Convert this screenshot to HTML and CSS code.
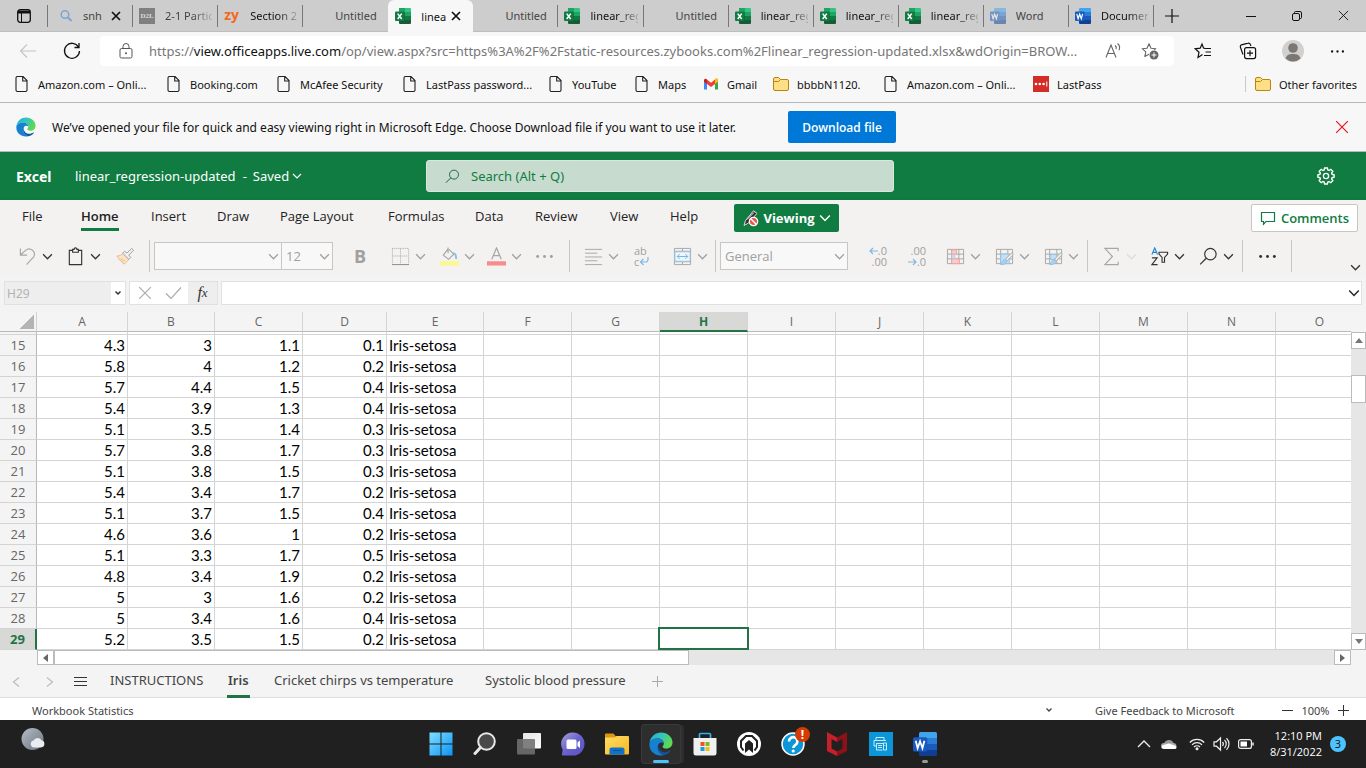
FILE: index.html
```
<!DOCTYPE html>
<html lang="en">
<head>
<meta charset="utf-8">
<title>linear_regression-updated.xlsx</title>
<link rel="stylesheet" href="styles.css">
</head>
<body>
<svg class="sprite" aria-hidden="true">
  <defs>
    <linearGradient id="gWin" x1="0" y1="0" x2="1" y2="1"><stop offset="0" stop-color="#7fe0ff"/><stop offset="1" stop-color="#0a94f5"/></linearGradient>
    <linearGradient id="gChat" x1="0" y1="0" x2="1" y2="1"><stop offset="0" stop-color="#a8a0d8"/><stop offset=".5" stop-color="#6a63cf"/><stop offset="1" stop-color="#5a4fc4"/></linearGradient>
    <linearGradient id="gMoon" x1="0" y1="0" x2="1" y2="1"><stop offset="0" stop-color="#b4bcc6"/><stop offset="1" stop-color="#6d7681"/></linearGradient>
    <linearGradient id="gFold" x1="0" y1="0" x2="1" y2="1"><stop offset="0" stop-color="#ffdc6b"/><stop offset="1" stop-color="#fbb91b"/></linearGradient>
    <linearGradient id="gEdge" x1="0" y1="0" x2="1" y2=".5"><stop offset="0" stop-color="#1fa9e4"/><stop offset=".5" stop-color="#33c6b8"/><stop offset="1" stop-color="#5fd94f"/></linearGradient>
    <linearGradient id="gView" x1="0" y1="0" x2="1" y2="1"><stop offset="0" stop-color="#e6e6e6"/><stop offset="1" stop-color="#fdfdfd"/></linearGradient>
  </defs>
  <symbol id="chev" viewBox="0 0 10 10"><path d="M1 3l4 4 4-4" fill="none" stroke="currentColor" stroke-width="1.2"/></symbol>
  <symbol id="cross" viewBox="0 0 12 12"><path d="M1 1l10 10M11 1L1 11" fill="none" stroke="currentColor" stroke-width="1"/></symbol>
  <symbol id="tabx" viewBox="0 0 10 10"><path d="M1 1l8 8M9 1L1 9" fill="none" stroke="currentColor" stroke-width="1.7"/></symbol>
  <symbol id="dots" viewBox="0 0 18 18"><g fill="currentColor"><circle cx="2.500" cy="9" r="1.400"/><circle cx="9" cy="9" r="1.400"/><circle cx="15.500" cy="9" r="1.400"/></g></symbol>
  <symbol id="xl" viewBox="0 0 16 16"><path d="M4 0h6v8H4z" fill="#21a366"/><path d="M10 0h5a1 1 0 0 1 1 1v3h-6z" fill="#33c481"/><path d="M10 4h6v4h-6z" fill="#21a366"/><path d="M4 4h6v4H4z" fill="#107c41"/><path d="M4 8h6v8H5a1 1 0 0 1-1-1z" fill="#185c37"/><path d="M10 8h6v4h-6z" fill="#107c41"/><path d="M10 12h6v3a1 1 0 0 1-1 1h-5z" fill="#185c37"/><rect y="3.500" width="9.500" height="9.500" rx="1" fill="#107c41"/><path d="M2.700 5.600l4 5.400M6.700 5.600l-4 5.400" stroke="#fff" stroke-width="1.500"/></symbol>
  <symbol id="wd" viewBox="0 0 16 16"><path d="M4 1a1 1 0 0 1 1-1h10a1 1 0 0 1 1 1v3H4z" fill="#41a5ee"/><path d="M4 4h12v4H4z" fill="#2b7cd3"/><path d="M4 8h12v4H4z" fill="#185abd"/><path d="M4 12h12v3a1 1 0 0 1-1 1H5a1 1 0 0 1-1-1z" fill="#103f91"/><rect y="3.500" width="9.500" height="9.500" rx="1" fill="#185abd"/><path d="M1.800 5.800l1.300 5 1.600-4.600 1.600 4.600 1.300-5" fill="none" stroke="#fff" stroke-width="1.200"/></symbol>
  <symbol id="page" viewBox="0 0 16 16"><path d="M3.500.5h5.500l4 4v9.500a1.500 1.500 0 0 1-1.500 1.500h-8a1.500 1.500 0 0 1-1.500-1.500v-12a1.500 1.500 0 0 1 1.500-1.500zM8.700.8v4.200h4.200" fill="none" stroke="#222" stroke-width="1.100"/></symbol>
  <symbol id="folder" viewBox="0 0 16 16"><path d="M.5 3a1.500 1.500 0 0 1 1.500-1.500h3.500L7.500 3.500H14A1.500 1.500 0 0 1 15.500 5v8a1.500 1.500 0 0 1-1.500 1.500H2A1.500 1.500 0 0 1 .5 13z" fill="#ffdf85" stroke="#b8860b"/><path d="M.8 5.500H5.500l2-2" fill="none" stroke="#b8860b"/></symbol>
  <symbol id="edge" viewBox="0 0 24 24"><path d="M.6 10.500C1.500 4.500 6.500.5 12 .5c6.500 0 11.500 4.500 11.500 10 0 3.700-2.700 6-6 6-2.400 0-3.900-.9-3.900-1.800 0-.8 1.200-1.200 1.200-3.200 0-3-2.800-5-6.300-5C5 6.500 2 8 .6 10.500z" fill="url(#gEdge)"/><path d="M.6 10.500C2 8 5 6.500 8.500 6.500c3.500 0 6.300 2 6.300 5-1-1.500-4-1.600-5.300.7-1.800 3.300-.5 8.800 5 11C6.500 24.800-.9 19 .6 10.500z" fill="#1680d2"/><path d="M9.500 12.200c-1.200 4.300 2.800 9 8 7.800 1.800-.4 3.300-1.200 4-1.900.6.400-2.300 4.900-7 5.100-5.500-2.200-6.800-7.700-5-11z" fill="#11559c"/></symbol>
  <symbol id="star" viewBox="0 0 18 18"><path d="M8 1.800l2 4.400 4.800.5-3.600 3.200 1 4.700L8 12.200l-4.200 2.400 1-4.700L1.200 6.700 6 6.200z" fill="none" stroke="currentColor" stroke-width="1.100" stroke-linejoin="round"/></symbol>
  <symbol id="lens" viewBox="0 0 20 20"><circle cx="12" cy="7.500" r="6" fill="none" stroke="currentColor" stroke-width="1.200"/><path d="M7.700 11.800L1.200 18.300" stroke="currentColor" stroke-width="1.300"/></symbol>
  <symbol id="gridico" viewBox="0 0 20 20"><path d="M1.500 2.500h17v15h-17zM1.500 7.500h17M1.500 12.500h17M6 2.500v15M13.500 2.500v15" fill="none" stroke="#a6a6a6"/></symbol>
  <symbol id="brush" viewBox="0 0 20 20"><path d="M18.500 6.500c.8.600.4 1.600-.3 2.500l-5.500 5.500-1.700-1.500 5-5.500c1-.9 1.800-1.500 2.500-1z" fill="#f3f2f1" stroke="#a6a6a6"/><path d="M10.800 13.300c1.500.4 2 1.700 1.200 3.200-1.200 2-4 2.500-6.500 1.700 1.800-.6 1.800-1.700 2.400-3 .6-1.400 1.700-2.100 2.900-1.900z" fill="#a9d0ee" stroke="#7fb4dc" stroke-width=".6"/></symbol>
</svg>

<header class="browser">
  <div class="tabstrip">
    <button class="tabmenu" aria-label="Tab actions"><svg width="14" height="14" viewBox="0 0 14 14"><rect x=".7" y=".7" width="12.600" height="12.600" rx="2.500" fill="none" stroke="#111" stroke-width="1.300"/><path d="M1 1.500h12v3H1z" fill="#111"/><path d="M4.500 4v9" stroke="#111"/></svg></button>
    <nav class="tabs" aria-label="Browser tabs">
      <a class="tab tab-small" href="#"><svg class="fav" viewBox="0 0 12 16"><circle cx="5" cy="6.500" r="3.800" fill="none" stroke="#7ba7d4" stroke-width="1.500"/><path d="M7.700 9.300L11.500 13" stroke="#7ba7d4" stroke-width="2"/></svg><span class="title dim">snh</span><svg class="close"><use href="#tabx"/></svg></a>
      <a class="tab" href="#"><span class="fav d2l">D2L</span><span class="title dim fade">2-1 Partic</span></a>
      <a class="tab" href="#"><span class="fav zy">zy</span><span class="title fade">Section 2</span></a>
      <a class="tab plain" href="#"><span class="fav"></span><span class="title dim">Untitled</span></a>
      <a class="tab active" href="#" aria-current="page"><svg class="fav"><use href="#xl"/></svg><span class="title">linea</span><svg class="close"><use href="#tabx"/></svg></a>
      <a class="tab" href="#"><span class="fav"></span><span class="title dim">Untitled</span></a>
      <a class="tab" href="#"><svg class="fav"><use href="#xl"/></svg><span class="title fade">linear_reg</span></a>
      <a class="tab" href="#"><span class="fav"></span><span class="title dim">Untitled</span></a>
      <a class="tab" href="#"><svg class="fav"><use href="#xl"/></svg><span class="title fade">linear_reg</span></a>
      <a class="tab" href="#"><svg class="fav"><use href="#xl"/></svg><span class="title fade">linear_reg</span></a>
      <a class="tab" href="#"><svg class="fav"><use href="#xl"/></svg><span class="title fade">linear_reg</span></a>
      <a class="tab" href="#"><svg class="fav faded"><use href="#wd"/></svg><span class="title dim">Word</span></a>
      <a class="tab" href="#"><svg class="fav"><use href="#wd"/></svg><span class="title fade">Documer</span></a>
    </nav>
    <button class="newtab" aria-label="New tab"><svg width="14" height="14" viewBox="0 0 14 14"><path d="M7 0v14M0 7h14" stroke="#111" stroke-width="1.200"/></svg></button>
    <div class="winctl">
      <button aria-label="Minimize"><svg width="10" height="10" viewBox="0 0 10 10"><path d="M0 5.500h10" stroke="#111"/></svg></button>
      <button aria-label="Restore"><svg width="10" height="10" viewBox="0 0 10 10"><rect x=".5" y="2.500" width="7" height="7" rx="1.500" fill="none" stroke="#111"/><path d="M2.500 2V1.500a1 1 0 0 1 1-1H8A1.500 1.500 0 0 1 9.500 2v4.500a1 1 0 0 1-1 1H8" fill="none" stroke="#111"/></svg></button>
      <button aria-label="Close"><svg width="11" height="11"><use href="#cross"/></svg></button>
    </div>
  </div>

  <div class="navbar">
    <button class="ic light" aria-label="Back"><svg width="18" height="18" viewBox="0 0 18 18"><path d="M17 9H1.500M8 2.500L1.500 9 8 15.500" fill="none" stroke="currentColor" stroke-width="1.100"/></svg></button>
    <button class="ic" aria-label="Refresh"><svg width="18" height="18" viewBox="0 0 18 18"><path d="M15.500 5A7.500 7.500 0 1 0 16.500 9M16 1v4.500h-4.500" fill="none" stroke="currentColor" stroke-width="1.300"/></svg></button>
    <div class="address">
      <svg class="lock" width="14" height="16" viewBox="0 0 14 16"><rect x="1" y="5.500" width="12" height="9.500" rx="1.500" fill="none" stroke="#555"/><path d="M4 5.500V3.500a3 3 0 0 1 6 0v2" fill="none" stroke="#555"/><circle cx="7" cy="10.300" r="1" fill="#555"/></svg>
      <span class="url">https://<b>view.officeapps.live.com</b>/op/view.aspx?src=https%3A%2F%2Fstatic-resources.zybooks.com%2Flinear_regression-updated.xlsx&amp;wdOrigin=BROW...</span>
      <button aria-label="Read aloud"><svg width="18" height="18" viewBox="0 0 18 18"><path d="M1 15.500L6 3l5 12.500M2.700 11.500h6.600M10 3.500c1.200.8 1.500 2.200 1 3.500M12.500 1.500c2.200 1.800 2.500 4.500 1.500 6.800" fill="none" stroke="#666" stroke-width="1.100"/></svg></button>
      <button aria-label="Add to favorites"><svg width="18" height="18" viewBox="0 0 18 18"><g color="#666"><use href="#star" width="18" height="18"/></g><circle cx="13" cy="13" r="5.200" fill="#fff"/><circle cx="13" cy="13" r="4.500" fill="#666"/><path d="M13 10.500v5M10.500 13h5" stroke="#fff"/></svg></button>
    </div>
    <div class="navtools">
      <button aria-label="Favorites"><svg width="18" height="18" viewBox="0 0 18 18"><path d="M11 6.300L9.500 6 8 2 6.200 6.200 1.200 6.800 5 10.200 4 15.500 8.500 12.500M11 6.500h6M11.500 10h5.500M10 13.500h7" fill="none" stroke="#111" stroke-width="1.200"/></svg></button>
      <button aria-label="Collections"><svg width="18" height="18" viewBox="0 0 18 18"><path d="M4 12.500L1.500 5.500a2 2 0 0 1 1-2.700L9 1.200a2 2 0 0 1 2.500 1.500l.4 1.300" fill="none" stroke="#111" stroke-width="1.200"/><rect x="5.600" y="5.600" width="11" height="11" rx="2" fill="none" stroke="#111" stroke-width="1.200"/><path d="M11 8.200v6M8 11.200h6" stroke="#111" stroke-width="1.200"/></svg></button>
      <button aria-label="Profile"><svg width="22" height="22" viewBox="0 0 22 22"><circle cx="11" cy="11" r="11" fill="#d2d0ce"/><circle cx="11" cy="8" r="4.800" fill="#7a7774"/><path d="M3.500 18.500c1.500-4 4-4.500 7.500-4.500s6 .5 7.500 4.500A11 11 0 0 1 3.500 18.500z" fill="#7a7774"/></svg></button>
      <button aria-label="Settings and more"><svg width="15" height="15" color="#111"><use href="#dots"/></svg></button>
    </div>
  </div>

  <nav class="bookmarks" aria-label="Favorites bar">
    <a href="#"><svg><use href="#page"/></svg>Amazon.com – Onli...</a>
    <a href="#"><svg><use href="#page"/></svg>Booking.com</a>
    <a href="#"><svg><use href="#page"/></svg>McAfee Security</a>
    <a href="#"><svg><use href="#page"/></svg>LastPass password...</a>
    <a href="#"><svg><use href="#page"/></svg>YouTube</a>
    <a href="#"><svg><use href="#page"/></svg>Maps</a>
    <a href="#"><svg viewBox="0 0 16 16"><path d="M1 4v9.500h3V6z" fill="#4285f4"/><path d="M12 6v7.500h3V4z" fill="#34a853"/><path d="M12 3.500V8l3-2.300V4a1.500 1.500 0 0 0-3-.5z" fill="#fbbc04"/><path d="M4 3.500L8 6.700l4-3.200V8l-4 3-4-3z" fill="#ea4335"/><path d="M1 4v1.700L4 8V3.500A1.600 1.600 0 0 0 1 4z" fill="#c5221f"/></svg>Gmail</a>
    <a href="#"><svg><use href="#folder"/></svg>bbbbN1120.</a>
    <a href="#"><svg><use href="#page"/></svg>Amazon.com – Onli...</a>
    <a href="#"><svg viewBox="0 0 16 16"><path d="M0 0h16v16H0z" fill="#d32d27"/><g fill="#fff"><circle cx="3" cy="8" r="1.300"/><circle cx="6.800" cy="8" r="1.300"/><circle cx="10.600" cy="8" r="1.300"/><path d="M13.300 5.500h1v5h-1z"/></g></svg>LastPass</a>
    <a href="#" class="other"><svg><use href="#folder"/></svg>Other favorites</a>
  </nav>

  <div class="infobar">
    <svg width="20" height="20"><use href="#edge"/></svg>
    <p>We’ve opened your file for quick and easy viewing right in Microsoft Edge. Choose Download file if you want to use it later.</p>
    <button class="download">Download file</button>
    <button class="dismiss" aria-label="Dismiss"><svg width="14" height="14"><use href="#cross"/></svg></button>
  </div>
</header>

<div class="apphead">
  <div class="doc"><strong>Excel</strong><span class="docname">linear_regression-updated</span><span>-</span><button>Saved <svg width="10" height="10"><use href="#chev"/></svg></button></div>
  <label class="search"><svg width="15" height="15"><use href="#lens"/></svg><input type="search" placeholder="Search (Alt + Q)" aria-label="Search"></label>
  <button class="gear" aria-label="Settings"><svg width="18" height="18" viewBox="0 0 18 18"><path d="M7.600 1h2.800l.4 2 1.300.5 1.700-1.200 2 2-1.200 1.700.5 1.300 2 .4v2.600l-2 .4-.5 1.300 1.200 1.700-2 2-1.700-1.200-1.300.5-.4 2H7.600l-.4-2-1.300-.5-1.700 1.200-2-2 1.200-1.700-.5-1.300-2-.4V7.700l2-.4.5-1.300L2.200 4.300l2-2 1.700 1.200L7.200 3z" fill="none" stroke="#fff" stroke-width="1.400"/><circle cx="9" cy="9" r="2.600" fill="none" stroke="#fff" stroke-width="1.300"/></svg></button>
</div>

<section class="ribbon">
  <nav class="ribtabs" aria-label="Ribbon tabs">
    <a href="#">File</a><a href="#" class="on">Home</a><a href="#">Insert</a><a href="#">Draw</a><a href="#">Page Layout</a><a href="#">Formulas</a><a href="#">Data</a><a href="#">Review</a><a href="#">View</a><a href="#">Help</a>
    <button class="viewing"><svg width="17" height="17" viewBox="0 0 17 17"><path d="M11.500.8l3.500 2.600L6.500 13 2 15.500l1.500-5z" fill="#333" stroke="#ddd"/><path d="M5 9.500l7-7" stroke="#eee"/><circle cx="11.500" cy="11.500" r="4.200" fill="#e9534b" stroke="#fff" stroke-width="1.200"/><path d="M8.700 8.700l5.600 5.600" stroke="#fff" stroke-width="1.400"/></svg>Viewing<svg width="12" height="12"><use href="#chev"/></svg></button>
    <button class="comments"><svg width="16" height="16" viewBox="0 0 16 16"><path d="M1.500 2.500h13v9H6l-2.500 2.700v-2.700h-2z" fill="none" stroke="#107c41" stroke-width="1.200"/></svg>Comments</button>
  </nav>

  <div class="tools">
    <button aria-label="Undo"><svg class="i" viewBox="0 0 20 20"><path d="M2.500 1.500v7h7M2.800 8.200L8 3.500c5-4 11.500 1.500 8.500 7L9 18.500" fill="none" stroke="#a6a6a6" stroke-width="1.200"/></svg><svg class="c dark"><use href="#chev"/></svg></button>
    <button aria-label="Paste"><svg class="i" viewBox="0 0 20 20"><path d="M7 3.500H3.500v15h13v-15H13M7 5.500v-3h1.500c0-2.200 3-2.200 3 0H13v3z" fill="none" stroke="#333" stroke-width="1.200"/></svg><svg class="c dark"><use href="#chev"/></svg></button>
    <button aria-label="Format painter"><svg class="i" viewBox="0 0 20 20"><path d="M1 9.500c3 0 5-1 6.500-3l6 6c-1 2-3 4-5 5.500-3-2.500-5.500-5-7.500-8.500z" fill="#fbe3c8" stroke="#eab887"/><path d="M4.500 13.500l3-1M6.500 15.500l3-2" stroke="#eab887"/><path d="M7 6.500l2-2 2.500 2 5-5 2 2-5 5 2 2.500-2 2z" fill="#f3f2f1" stroke="#999"/></svg></button>
    <hr>
    <label class="box w128"><select aria-label="Font" disabled><option></option></select><svg class="c"><use href="#chev"/></svg></label>
    <label class="box w52"><select aria-label="Font size" disabled><option>12</option></select><svg class="c"><use href="#chev"/></svg></label>
    <button class="bold" aria-label="Bold">B</button>
    <button aria-label="Borders"><svg class="i" viewBox="0 0 20 20"><path d="M1.500 2v16M18.500 2v16M1 1.500h18M10 2v16M2 9.500h16" stroke="#a6a6a6" stroke-dasharray="1 1" fill="none"/><path d="M1 18.500h18" stroke="#888"/></svg><svg class="c"><use href="#chev"/></svg></button>
    <button aria-label="Fill color"><svg class="i" viewBox="0 0 20 20"><path d="M8.500.5v6M9.500 2.500l5 5-5.500 5.500-5.500-4.500 5-6.500" fill="none" stroke="#a6a6a6" stroke-width="1.200"/><path d="M13 6.500c3-.5 4 2 4 6" fill="none" stroke="#8bbfe2" stroke-width="2"/><path d="M0 15h20v4.500H0z" fill="#fbf98b"/></svg><svg class="c"><use href="#chev"/></svg></button>
    <button aria-label="Font color"><svg class="i" viewBox="0 0 20 20"><path d="M5 13L10 1l5 12M6.800 9h6.400" fill="none" stroke="#a6a6a6" stroke-width="1.300"/><path d="M0 15h20v4.500H0z" fill="#f98b8b"/></svg><svg class="c"><use href="#chev"/></svg></button>
    <button aria-label="More font options"><svg class="i"><use href="#dots"/></svg></button>
    <hr>
    <button aria-label="Align"><svg class="i" viewBox="0 0 20 20"><path d="M1 2.500h18M1 6.500h13M1 10.500h18M1 14.500h13M1 18.500h18" stroke="#a6a6a6"/></svg><svg class="c"><use href="#chev"/></svg></button>
    <button class="wrap" aria-label="Wrap text"><span>ab</span><span>c<svg width="10" height="9" viewBox="0 0 10 9"><path d="M9 0v2.500a2.500 2.500 0 0 1-2.500 2.500H1.500M4.500 2L1.500 5l3 3" fill="none" stroke="#7fb8e4" stroke-width="1.200"/></svg></span></button>
    <button aria-label="Merge"><svg class="i" viewBox="0 0 20 20"><path d="M1.500 1.500h17v17h-17zM1.500 4.500h17M1.500 15.500h17M10 1.500v3M10 15.500v3" fill="none" stroke="#a6a6a6"/><path d="M2 5h16v10H2z" fill="#eef6fc" stroke="#8fc3e8"/><path d="M4.500 10h11M7 7.500L4.500 10 7 12.500M13 7.500l2.500 2.500-2.500 2.500" fill="none" stroke="#6eb2e2"/></svg><svg class="c"><use href="#chev"/></svg></button>
    <hr>
    <label class="box w128"><select aria-label="Number format" disabled><option>General</option></select><svg class="c"><use href="#chev"/></svg></label>
    <button class="dec" aria-label="Increase decimal"><span><svg width="9" height="8" viewBox="0 0 9 8"><path d="M9 4H1M4 1L1 4l3 3" fill="none" stroke="#7fb8e4" stroke-width="1.200"/></svg>.0</span><span>.00</span></button>
    <button class="dec" aria-label="Decrease decimal"><span>.00</span><span><svg width="9" height="8" viewBox="0 0 9 8"><path d="M0 4h8M5 1l3 3-3 3" fill="none" stroke="#7fb8e4" stroke-width="1.200"/></svg>.0</span></button>
    <button aria-label="Conditional formatting"><svg class="i" viewBox="0 0 20 20"><use href="#gridico"/><path d="M6 3h5v4.500H6zM6 12.500h8v5H6z" fill="#fbcaca" stroke="#f0a0a0"/><path d="M6 8h4v4H6z" fill="#bcdcf4"/></svg><svg class="c"><use href="#chev"/></svg></button>
    <button aria-label="Format as table"><svg class="i" viewBox="0 0 20 20"><use href="#gridico"/><path d="M6 7.500h9v10H6z" fill="#c5e0f5" stroke="#8fc3e8"/><use href="#brush"/></svg><svg class="c"><use href="#chev"/></svg></button>
    <button aria-label="Cell styles"><svg class="i" viewBox="0 0 20 20"><use href="#gridico"/><path d="M6.500 8h7v5h-7z" fill="#c5e0f5" stroke="#8fc3e8"/><use href="#brush"/></svg><svg class="c"><use href="#chev"/></svg></button>
    <hr>
    <button aria-label="AutoSum"><svg class="i" viewBox="0 0 20 20"><path d="M17 4.500v-3H3l8 8.500-8 8.500h14v-3" fill="none" stroke="#a6a6a6" stroke-width="1.200"/></svg><svg class="c pale"><use href="#chev"/></svg></button>
    <button aria-label="Sort and filter"><svg class="i" viewBox="0 0 20 20"><path d="M2 8L5 1l3 7M3 5.700h4" fill="none" stroke="#1a86d9" stroke-width="1.200"/><path d="M2 11.500h5.500L2 18.500h6M9.500 5.500h9v2l-3.200 3.500v5h-2.600v-5L9.500 7.500z" fill="none" stroke="#333" stroke-width="1.200"/></svg><svg class="c dark"><use href="#chev"/></svg></button>
    <button class="inkdark" aria-label="Find"><svg class="i"><use href="#lens"/></svg><svg class="c dark"><use href="#chev"/></svg></button>
    <hr>
    <button class="inkdark" aria-label="More options"><svg class="i"><use href="#dots"/></svg></button>
    <hr>
    <button class="collapse" aria-label="Ribbon display"><svg class="c dark"><use href="#chev"/></svg></button>
  </div>
</section>

<div class="formula">
  <div class="namebox"><input value="H29" aria-label="Name box" disabled><button aria-label="Name list"><svg width="8" height="8" viewBox="0 0 8 8"><path d="M1.500 2.500L4 5l2.500-2.500" fill="none" stroke="#333" stroke-width="1.500"/></svg></button></div>
  <div class="fxbtns">
    <button aria-label="Cancel"><svg width="14" height="14" color="#aaa"><use href="#cross"/></svg></button>
    <button aria-label="Enter"><svg width="17" height="14" viewBox="0 0 17 14"><path d="M1 7.500l5 5L16 1.500" fill="none" stroke="#aaa" stroke-width="1.200"/></svg></button>
    <button class="fx" aria-label="Insert function"><i>f</i><i class="x">x</i></button>
  </div>
  <div class="fbar"><input aria-label="Formula bar"><svg width="12" height="12" color="#222"><use href="#chev"/></svg></div>
</div>

<main class="sheet">
  <div class="viewport">
    <table id="grid">
      <colgroup><col class="c-head"><col class="c-a"><col class="c-b"><col class="c-c"><col class="c-d"><col class="c-e"><col class="c-std" span="10"></colgroup>
      <thead></thead>
      <tbody></tbody>
    </table>
  </div>
  <div class="vscroll">
    <button aria-label="Scroll up"><svg width="8" height="5" viewBox="0 0 8 5"><path d="M4 0l4 5H0z" fill="#777"/></svg></button>
    <span class="vthumb"></span>
    <button aria-label="Scroll down"><svg width="8" height="5" viewBox="0 0 8 5"><path d="M0 0h8L4 5z" fill="#777"/></svg></button>
  </div>
  <div class="hscroll">
    <button aria-label="Scroll left"><svg width="5" height="8" viewBox="0 0 5 8"><path d="M5 0v8L0 4z" fill="#666"/></svg></button>
    <span class="hthumb"></span>
    <button aria-label="Scroll right"><svg width="5" height="8" viewBox="0 0 5 8"><path d="M0 0v8l5-4z" fill="#666"/></svg></button>
  </div>
</main>

<nav class="sheettabs" aria-label="Sheets">
  <button aria-label="Previous sheet"><svg width="8" height="12" viewBox="0 0 8 12"><path d="M7 1.500L1.500 6 7 10.500" fill="none" stroke="#bbb" stroke-width="1.200"/></svg></button>
  <button aria-label="Next sheet"><svg width="8" height="12" viewBox="0 0 8 12"><path d="M1 1.500L6.500 6 1 10.500" fill="none" stroke="#bbb" stroke-width="1.200"/></svg></button>
  <button aria-label="All sheets"><svg width="13" height="12" viewBox="0 0 13 12"><path d="M0 1.500h13M0 5.500h13M0 9.500h13" stroke="#333"/></svg></button>
  <a href="#">INSTRUCTIONS</a>
  <a href="#" class="on">Iris</a>
  <a href="#">Cricket chirps vs temperature</a>
  <a href="#">Systolic blood pressure</a>
  <button aria-label="New sheet"><svg width="11" height="11" viewBox="0 0 11 11"><path d="M5.500 0v11M0 5.500h11" stroke="#aaa"/></svg></button>
</nav>

<footer class="status">
  <span>Workbook Statistics</span>
  <button class="pick" aria-label="Status options"><svg width="8" height="8" viewBox="0 0 8 8"><path d="M1.500 2.500L4 5l2.500-2.500" fill="none" stroke="#444" stroke-width="1.300"/></svg></button>
  <a href="#">Give Feedback to Microsoft</a>
  <div class="zoom"><button aria-label="Zoom out"><svg width="11" height="11" viewBox="0 0 11 11"><path d="M0 5.500h11" stroke="#333"/></svg></button><span>100%</span><button aria-label="Zoom in"><svg width="11" height="11" viewBox="0 0 11 11"><path d="M5.500 0v11M0 5.500h11" stroke="#333"/></svg></button></div>
</footer>

<div class="taskbar">
  <button class="weather" aria-label="Weather"><svg width="24" height="24" viewBox="0 0 24 24"><circle cx="11.500" cy="11" r="11" fill="url(#gMoon)"/><path d="M13 19.500a3.500 3.500 0 0 1-.5-6.900 4.500 4.500 0 0 1 8-.4 3.700 3.700 0 0 1-.5 7.300z" fill="#e9ecf1"/></svg></button>
  <div class="apps">
    <button aria-label="Start"><svg viewBox="0 0 24 24"><path d="M.5.5h11v11H.500zM12.500.5h11v11h-11zM.5 12.500h11v11H.500zM12.500 12.500h11v11h-11z" fill="url(#gWin)"/></svg></button>
    <button aria-label="Search"><svg viewBox="0 0 24 24"><circle cx="13.500" cy="9.500" r="8.300" fill="#4a4a4a" stroke="#e8e8e8" stroke-width="2"/><path d="M7.500 15.500L2 21.500" stroke="#e8e8e8" stroke-width="3" stroke-linecap="round"/></svg></button>
    <button aria-label="Task view"><svg viewBox="0 0 24 24"><rect x="6" y="1" width="18" height="15.500" rx="1" fill="url(#gView)"/><rect y="7" width="18" height="15.500" rx="1" fill="#707070" fill-opacity=".88"/></svg></button>
    <button aria-label="Chat"><svg viewBox="0 0 24 24"><path d="M12 .5a11.500 11.500 0 0 1 0 23H2c-.9 0-1.200-.6-1-1.500l.7-4.300A11.500 11.500 0 0 1 12 .5z" fill="url(#gChat)"/><rect x="5.500" y="7.500" width="10" height="9.500" rx="1.500" fill="#fff"/><path d="M16.500 10.500l2.500-2v7.500l-2.500-2z" fill="#fff"/></svg></button>
    <button aria-label="File Explorer"><svg viewBox="0 0 24 24"><path d="M0 2.500A1 1 0 0 1 1 1.500h7.500l2.500 3v4H0z" fill="#e0960d"/><path d="M0 5.500h9.500l2-1.500H23a1 1 0 0 1 1 1v16.500a1 1 0 0 1-1 1H1a1 1 0 0 1-1-1z" fill="url(#gFold)"/><path d="M4.500 22.500v-5a2 2 0 0 1 2-2h11a2 2 0 0 1 2 2v5z" fill="#1173c8"/><path d="M8 18.500h8" stroke="#0b5396"/></svg></button>
    <button class="current" aria-label="Edge"><svg viewBox="0 0 24 24"><use href="#edge"/></svg></button>
    <button aria-label="Store"><svg viewBox="0 0 24 24"><path d="M.5 6h23v15a2.500 2.500 0 0 1-2.500 2.500H3A2.500 2.500 0 0 1 .5 21z" fill="#f0f0f0"/><path d="M6.500 6V2.500a1 1 0 0 1 1-1h9a1 1 0 0 1 1 1V6" fill="none" stroke="#30b4ea" stroke-width="1.700"/><path d="M7.500 10h4v4h-4z" fill="#f05423"/><path d="M12.500 10h4v4h-4z" fill="#7fba1a"/><path d="M7.500 15h4v4h-4z" fill="#1a9be8"/><path d="M12.500 15h4v4h-4z" fill="#fbb915"/></svg></button>
    <button aria-label="System hub"><svg viewBox="0 0 24 24"><circle cx="12" cy="12" r="12" fill="#fff"/><path d="M6.500 18.500L4 15V9l5-5h6l5 5v6l-2.500 3.500" fill="none" stroke="#1f1f1f" stroke-width="2"/><path d="M8 21V11.500l4-3.500 4 3.500V21l-4-3.500z" fill="#1f1f1f"/></svg></button>
    <button aria-label="Help"><svg viewBox="0 0 24 24"><circle cx="12" cy="12" r="11" fill="#0c96d8" stroke="#fff" stroke-width="1.500"/><path d="M8 9.500a4.200 4.200 0 1 1 6.500 3.400c-1.600 1-2.200 1.500-2.200 3.100" fill="none" stroke="#fff" stroke-width="2.600"/><circle cx="12.200" cy="19" r="1.600" fill="#fff"/></svg><span class="alert">!</span></button>
    <button aria-label="McAfee"><svg viewBox="0 0 24 24"><path d="M2 0l10 5.500V10L6.500 7v9.500L12 19.500V24L2 19z" fill="#c8202b"/><path d="M22 0L12 5.500V10l5.500-3v9.500L12 19.500V24l10-5z" fill="#8c1218"/></svg></button>
    <button aria-label="Print"><svg viewBox="0 0 24 24"><path d="M0 0h24v24H0z" fill="#0c96d8"/><path d="M7 8.500V5.500h8v3M5 14V8.500h12M7.500 11.500H15M7.500 11v7h6M9 13.500h4M9 15.500h4M5 14h2.500M14.500 11h3v7h-3zM15.500 13.500h1" fill="none" stroke="#c7e9fa"/></svg></button>
    <button class="running" aria-label="Word"><svg viewBox="0 0 16 16"><use href="#wd"/></svg></button>
  </div>
  <div class="tray">
    <svg width="14" height="14" viewBox="0 0 14 14"><path d="M1 10l6-6 6 6" fill="none" stroke="#eee" stroke-width="1.300"/></svg>
    <svg width="16" height="16" viewBox="0 0 16 16"><path d="M3 8a5 5 0 0 1 9.500-1L8 11z" fill="#999"/><path d="M3 13a3 3 0 0 1 0-6l9 0a3 3 0 0 1 1 6z" fill="#aaa"/><path d="M3 13c-2.500-.3-3-2.500-1.500-3.800L8 7.500l5.500 2c2.500.8 2.500 3.200.5 3.500z" fill="#fff"/></svg>
    <svg width="16" height="16" viewBox="0 0 16 16"><path d="M.8 6.500a10 10 0 0 1 14.400 0M3 8.800a7 7 0 0 1 10 0M5 11a4.200 4.200 0 0 1 6 0" fill="none" stroke="#eee" stroke-width="1.200"/><circle cx="8" cy="12.700" r="1.500" fill="#eee"/></svg>
    <svg width="17" height="16" viewBox="0 0 17 16"><path d="M1 5.800h2.500L7.500 2v12l-4-3.800H1zM9.500 6a3 3 0 0 1 0 4M11.500 4a5.500 5.500 0 0 1 0 8M13.500 2.200a8 8 0 0 1 0 11.600" fill="none" stroke="#eee" stroke-width="1.200"/></svg>
    <svg width="16" height="16" viewBox="0 0 16 16"><rect x=".6" y="3.600" width="12.800" height="8.800" rx="2" fill="none" stroke="#eee" stroke-width="1.200"/><path d="M2.500 5.500H9v5H2.500z" fill="#fff"/><path d="M15 6.500v3" stroke="#eee" stroke-width="1.500"/></svg>
    <div class="clock"><span>12:10 PM</span><span>8/31/2022</span></div>
    <span class="count">3</span>
  </div>
</div>
<script src="grid.js"></script>
</body>
</html>
```

FILE: grid.js
```
const letters = 'ABCDEFGHIJKLMNO'.split('');
const selected = { col: 'H', row: 29 };
const records = [
  [4.3, 3, 1.1, 0.1], [5.8, 4, 1.2, 0.2], [5.7, 4.4, 1.5, 0.4],
  [5.4, 3.9, 1.3, 0.4], [5.1, 3.5, 1.4, 0.3], [5.7, 3.8, 1.7, 0.3],
  [5.1, 3.8, 1.5, 0.3], [5.4, 3.4, 1.7, 0.2], [5.1, 3.7, 1.5, 0.4],
  [4.6, 3.6, 1, 0.2], [5.1, 3.3, 1.7, 0.5], [4.8, 3.4, 1.9, 0.2],
  [5, 3, 1.6, 0.2], [5, 3.4, 1.6, 0.4], [5.2, 3.5, 1.5, 0.2]
];

function cell(tag, text, cls) {
  const el = document.createElement(tag);
  el.textContent = text;
  if (cls) el.className = cls;
  return el;
}

const grid = document.getElementById('grid');
const head = document.createElement('tr');
head.append(cell('th', '', 'corner'));
letters.forEach(l => head.append(cell('th', l, l === selected.col ? 'sel' : '')));
grid.tHead.append(head);

const body = grid.tBodies[0];
const partial = document.createElement('tr');
partial.className = 'partial';
partial.append(cell('th', ''));
letters.forEach(() => partial.append(cell('td', '')));
body.append(partial);

records.forEach((values, i) => {
  const number = 15 + i;
  const tr = document.createElement('tr');
  tr.append(cell('th', number, number === selected.row ? 'sel' : ''));
  letters.forEach((l, c) => {
    if (c < 4) tr.append(cell('td', values[c], 'num'));
    else if (c === 4) tr.append(cell('td', 'Iris-setosa'));
    else tr.append(cell('td', '', l === selected.col && number === selected.row ? 'cursor' : ''));
  });
  body.append(tr);
});
```

FILE: styles.css
```
* { box-sizing: border-box; }
body {
  margin: 0;
  min-height: 100vh;
  display: flex;
  flex-direction: column;
  background: #f4f4f4;
  color: #222;
  font-family: "Noto Sans", "Open Sans", sans-serif;
  font-size: 13px;
  overflow-x: hidden;
}
button, input, select { font: inherit; color: inherit; background: none; border: 0; padding: 0; margin: 0; }
button { display: inline-flex; align-items: center; justify-content: center; }
a { color: inherit; text-decoration: none; }
svg { flex: none; display: block; }
p { margin: 0; }
.sprite { position: absolute; width: 0; height: 0; }

/* Browser chrome */
.browser { background: #f7f7f7; color: #111; font-size: 11px; }
.tabstrip { display: flex; align-items: stretch; height: 32px; background: #cdcdcd; border-bottom: 1px solid #bdbdbd; }
.tabmenu { width: 47px; }
.tabs { display: flex; flex: 0 1 1107px; min-width: 0; border-left: 1px solid #777; border-image: linear-gradient(transparent 6px, #777 6px 26px, transparent 26px) 1; }
.tab { flex: 1 1 85px; min-width: 0; display: flex; align-items: center; gap: 10px; padding: 0 5px 0 6px; border-right: 1px solid #777; border-image: linear-gradient(transparent 6px, #777 6px 26px, transparent 26px) 1; }
.tab-small { padding: 0 11px 0 12px; gap: 11px; }
.plain { border-image: none; border-right-color: transparent; }
.tab.active { background: #f7f7f7; border: 0; border-radius: 6px 6px 0 0; margin-bottom: -1px; padding: 0 12px 0 7px; }
.fav { width: 16px; height: 16px; flex: none; }
.tab-small .fav { width: 12px; }
.faded { opacity: .5; }
.title { flex: 1; min-width: 0; overflow: hidden; white-space: nowrap; }
.fade { -webkit-mask-image: linear-gradient(to right, #000 calc(100% - 20px), #0003); mask-image: linear-gradient(to right, #000 calc(100% - 20px), #0003); }
.title.dim { color: #444; }
.close { width: 10px; height: 10px; }
.tab-small .close, .active .close { margin-left: -8px; }
.d2l { background: #808080; color: #ddd; font: bold 7px/16px "Liberation Serif", serif; text-align: center; }
.zy { color: #f26a21; font: bold 14px/14px "Open Sans", sans-serif; }
.newtab { width: 36px; }
.winctl { margin-left: auto; display: flex; }
.winctl button { width: 46px; }

.navbar { display: flex; align-items: center; height: 38px; padding: 0 6px; }
.ic { width: 44px; height: 30px; }
.ic.light { color: #c4c4c4; }
.address { flex: 1; min-width: 0; display: flex; align-items: center; height: 30px; margin-left: 6px; padding: 0 6px 0 19px; background: #fff; border-radius: 4px; }
.lock { margin-right: 16px; }
.url { flex: 1; min-width: 0; overflow: hidden; text-overflow: ellipsis; white-space: nowrap; font-size: 13px; color: #767676; }
.url b { font-weight: 400; color: #111; }
.address button { width: 36px; }
.navtools { display: flex; align-items: center; margin-left: 6px; }
.navtools button { width: 45px; }

.bookmarks { display: grid; grid-template-columns: 152px 110px 126px 146px 86px 69px 70px 110px 150px auto 1fr; align-items: center; height: 32px; padding: 0 9px 4px 14px; }
.bookmarks a { display: flex; align-items: center; gap: 8px; white-space: nowrap; }
.bookmarks svg { width: 16px; height: 16px; }
.bookmarks .other { justify-self: end; border-left: 1px solid #c8c8c8; padding-left: 9px; }

.infobar { display: flex; align-items: center; height: 50px; padding: 0 17px 0 16px; border-top: 1px solid #b9b9b9; border-bottom: 1px solid #b9b9b9; font-size: 12px; }
.infobar p { margin: 0 32px 0 16px; flex: 0 0 704px; white-space: nowrap; }
.download { width: 108px; height: 32px; border-radius: 2px; background: #0078d7; color: #fff; font-family: "Open Sans", sans-serif; font-weight: 600; }
.dismiss { margin-left: auto; color: #e81123; }

/* Excel header */
.apphead { display: grid; grid-template-columns: 426px minmax(0, 468px) 1fr; align-items: center; height: 48px; background: #107c41; color: #fff; }
.doc { display: flex; align-items: center; padding-left: 16px; white-space: nowrap; }
.doc strong { width: 59px; font-size: 14px; }
.docname { margin-right: 7px; }
.doc button { margin-left: 6px; gap: 3px; }
.search { display: flex; align-items: center; gap: 11px; height: 32px; padding: 0 18px; border-radius: 3px; background: #c7dccf; border: 1px solid #d9e8df; color: #185c37; }
.search input { flex: 1; outline: 0; }
.search input::placeholder { color: #107c41; opacity: 1; }
.gear { justify-self: end; margin-right: 31px; }

/* Ribbon */
.ribbon { background: #f3f2f1; box-shadow: 0 1px 3px #00000026; height: 76px; font-family: "Open Sans", "Noto Sans", sans-serif; }
.ribtabs { display: grid; grid-template-columns: 59px 70px 66px 63px 108px 87px 60px 75px 60px 64px auto 1fr; align-items: start; padding: 4px 8px 0 22px; height: 36px; }
.ribtabs a { justify-self: start; white-space: nowrap; line-height: 24px; padding-bottom: 3px; }
.ribtabs .on { font-weight: 600; padding-bottom: 0; border-bottom: 3px solid #107c41; }
.viewing { height: 28px; width: 105px; gap: 4px; background: #107c41; color: #fff; border-radius: 2px; font-weight: 700; }
.comments { justify-self: end; width: 107px; height: 28px; gap: 5px; border: 1px solid #c8c6c4; border-radius: 2px; background: #fff; color: #107c41; font-weight: 600; }

.tools { display: grid; grid-template-columns: 48px 50px 33px 5px 127px 73px 37px 49px 47px 48px 34px 15px 50px 39px 42px 5px 147px 39px 40px 49px 49px 43px 15px 48px 49px 43px 16px 33px 1px 1fr; align-items: center; justify-items: start; height: 40px; padding-left: 18px; color: #a0a0a0; }
.tools button { gap: 5px; }
.i { width: 19px; height: 19px; }
.c { width: 11px; height: 11px; }
.dark, .inkdark { color: #333; }
.pale { color: #dcdcdc; }
.tools hr { width: 1px; height: 32px; margin: 0; border: 0; background: #c8c6c4; }
.box { display: flex; align-items: center; height: 28px; padding: 0 2px 0 4px; border: 1px solid #c8c6c4; background: #f8f8f8; }
.box select { flex: 1; min-width: 0; width: 100%; appearance: none; opacity: 1; color: #a0a0a0; }
.w128 { width: 128px; }
.w52 { width: 52px; }
.tools .bold { font-size: 18px; font-weight: 700; }
.wrap, .dec { flex-direction: column; font-size: 11px; line-height: 11px; }
.tools .wrap, .tools .dec { gap: 0; align-items: flex-start; }
.wrap span, .dec span { display: flex; align-items: center; }
.tools .dec { align-items: flex-end; width: 20px; }
.collapse { justify-self: end; align-self: end; margin: 0 5px 3px 0; }

/* Formula bar */
.formula { display: flex; height: 36px; padding: 5px 4px 7px; background: #f3f3f3; }
.formula > div { display: flex; align-items: stretch; border: 1px solid #e1e1e1; background: #fff; }
.namebox { width: 122px; margin-right: 3px; }
.namebox input { width: 106px; padding-left: 2px; background: #eee; color: #b3b3b3; font-size: 12px; }
.namebox button { flex: 1; }
.fxbtns { width: 89px; margin-right: 3px; }
.fxbtns button { flex: 1; }
.fx { background: #eee; color: #333; font: 16px/20px "Liberation Serif", serif; }
.fx .x { font-size: 13px; }
.formula .fbar { flex: 1; align-items: center; padding-right: 1px; }
.fbar input { flex: 1; outline: 0; }

/* Grid */
.sheet { display: grid; grid-template-columns: minmax(0, 1fr) 15px; grid-template-rows: auto 15px; }
.viewport { overflow: hidden; }
#grid { width: 1363px; table-layout: fixed; border-collapse: separate; border-spacing: 0; background: #fff; font-family: Lato, "Open Sans", sans-serif; font-size: 15px; color: #000; }
.c-head { width: 37px; }
.c-a { width: 91px; }
.c-b { width: 87px; }
.c-c { width: 88px; }
.c-d { width: 84px; }
.c-e { width: 97px; }
.c-std { width: 88px; }
#grid th, #grid td { height: 21px; padding: 1px 2px 0; line-height: 19px; white-space: nowrap; border-right: 1px solid #d4d4d4; border-bottom: 1px solid #d4d4d4; }
#grid th { background: #f4f4f4; color: #666; font-weight: 400; font-family: "Open Sans", sans-serif; font-size: 12px; }
#grid thead th { height: 20px; line-height: 18px; padding: 0; border-bottom-color: #b9b9b9; }
#grid tbody th { border-right-color: #b9b9b9; font-size: 13px; }
#grid .corner { background: linear-gradient(135deg, transparent 50%, #b4b4b4 50%) 19px 3px / 15px 14px no-repeat #f4f4f4; }
#grid .partial th, #grid .partial td { height: 3px; padding: 0; line-height: 2px; }
#grid .num { text-align: right; }
#grid th.sel { background: #d8d8d6; color: #217346; font-weight: 700; }
#grid thead .sel { border-bottom: 2px solid #217346; line-height: 17px; }
#grid tbody .sel { border-right: 2px solid #217346; }
.cursor { position: relative; }
.cursor::after { content: ""; position: absolute; inset: -2px -2px -1px; border: 2px solid #217346; }
.vscroll { margin-top: 20px; display: flex; flex-direction: column; background: #e6e6e6; }
.vscroll button { height: 17px; background: #fff; border: 1px solid #bbb; }
.vthumb { height: 28px; margin: 26px 0 auto; background: #fff; border: 1px solid #bbb; }
.hscroll { margin-left: 37px; display: flex; background: #e6e6e6; }
.hscroll button { width: 17px; background: #fff; border: 1px solid #bbb; }
.hthumb { flex: 0 0 48.3%; margin-right: auto; background: #fff; border: 1px solid #bbb; }

/* Sheet tabs and status bar */
.sheettabs { display: grid; grid-template-columns: 34px 28px 36px 117px 47px 211px 167px auto; align-items: stretch; justify-items: start; height: 33px; padding-left: 12px; background: #f4f4f4; border-bottom: 1px solid #dcdcdc; color: #444; }
.sheettabs a { white-space: nowrap; line-height: 30px; }
.sheettabs .on { padding: 0 1px; font-weight: 600; border-bottom: 3px solid #217346; }
.status { display: flex; align-items: center; height: 22px; padding: 2px 17px 0 32px; background: #fff; color: #444; font-size: 11px; }
.status .pick { margin-left: auto; margin-right: 42px; }
.status a { flex: 0 0 145px; white-space: nowrap; }
.zoom { display: flex; align-items: center; justify-content: space-between; width: 67px; margin-left: 42px; }

/* Taskbar */
.taskbar { display: grid; grid-template-columns: 1fr auto 1fr; align-items: center; height: 48px; background: #202020; color: #fff; font-family: "Open Sans", sans-serif; }
.weather { justify-self: start; margin: 0 0 8px 21px; }
.apps { display: flex; gap: 4px; }
.apps button { position: relative; width: 40px; height: 40px; border-radius: 4px; }
.apps svg { width: 24px; height: 24px; }
.apps .current { background: #2e2e2e; box-shadow: inset 0 0 0 1px #3a3a3a, 4px 0 0 -1px #2e2e2e; }
.current::after, .running::after { content: ""; position: absolute; bottom: 1px; height: 3px; border-radius: 2px; width: 16px; background: #4cc2ff; }
.running::after { width: 6px; background: #9a9a9a; }
.alert { position: absolute; right: 3px; top: 3px; width: 15px; height: 15px; border-radius: 50%; background: #d83b01; font-size: 12px; font-weight: 700; line-height: 15px; }
.tray { justify-self: end; display: flex; align-items: center; gap: 8px; padding-right: 20px; }
.tray svg:first-child { margin-right: 2px; }
.tray svg:nth-child(2) { margin-right: 4px; }
.clock { display: flex; flex-direction: column; align-items: flex-end; width: 60px; font-size: 11px; line-height: 16px; }
.count { width: 16px; height: 16px; border-radius: 50%; background: #4cc2ff; color: #111; font-size: 11px; line-height: 16px; text-align: center; }
```
